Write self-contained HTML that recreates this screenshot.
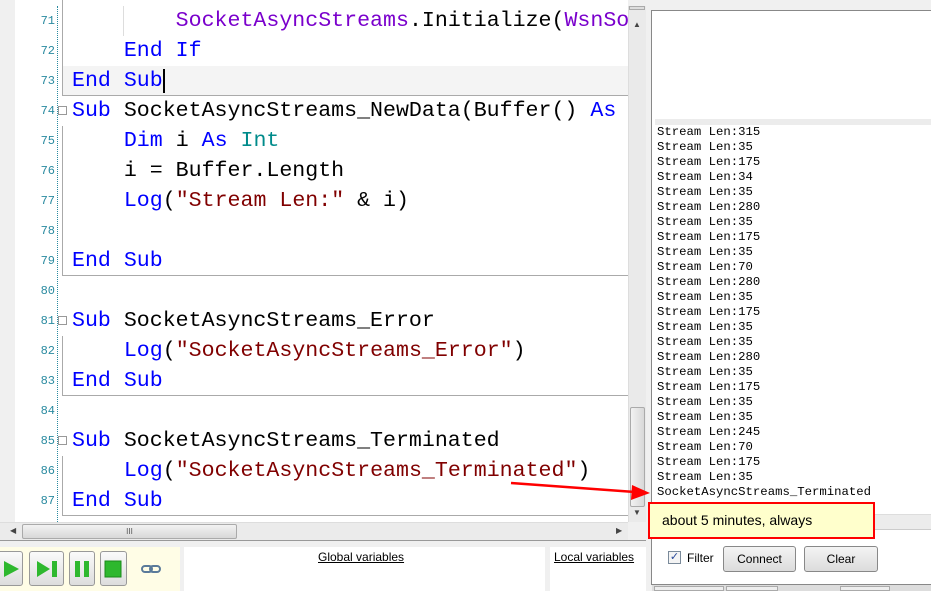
<!DOCTYPE html>
<html><head><meta charset="utf-8"><style>
*{margin:0;padding:0;box-sizing:border-box}
body{width:931px;height:591px;overflow:hidden;background:#f0f0f0;position:relative;font-family:"Liberation Sans",sans-serif}
.a{position:absolute}
.code{font-family:"Liberation Mono",monospace;font-size:21.6px;line-height:30px;white-space:pre;color:#000}
.ln{position:absolute;left:15px;width:40px;text-align:right;font-family:"Liberation Mono",monospace;font-size:12px;color:#2a8aa0;line-height:30px}
.k{color:#0000ff}.p{color:#7a00cc}.t{color:#008b8b}.s{color:#800000}
.log{font-family:"Liberation Mono",monospace;font-size:12.3px;line-height:15px;white-space:pre;color:#000}
.btn{position:absolute;border:1px solid #888;border-radius:3px;background:linear-gradient(#f4f4f4,#dcdcdc);font-size:12px;text-align:center;line-height:24px;color:#000}
.pb{position:absolute;top:551px;width:40px;height:35px;border:1px solid #999;border-radius:3px;background:linear-gradient(#fafafa,#ddd)}
</style></head><body>
<!-- code editor -->
<div class="a" style="left:0;top:0;width:15px;height:522px;background:#f0f0f0"></div>
<div class="a" style="left:15px;top:0;width:613px;height:522px;background:#fff"></div>
<div class="a" style="left:57px;top:6px;height:516px;border-left:1px dotted #2a8aa0"></div>
<div class="a" style="left:62px;top:66px;width:566px;height:30px;background:#f4f4f4"></div>
<div class="a" style="left:62px;top:0;height:96px;border-left:1px solid #aaa"></div>
<div class="a" style="left:62px;top:95px;width:566px;border-top:1px solid #aaa"></div>
<div class="a" style="left:123px;top:6px;height:30px;border-left:1px solid #ddd"></div>
<div class="a" style="left:62px;top:126px;height:150px;border-left:1px solid #aaa"></div>
<div class="a" style="left:62px;top:275px;width:566px;border-top:1px solid #aaa"></div>
<div class="a" style="left:62px;top:336px;height:60px;border-left:1px solid #aaa"></div>
<div class="a" style="left:62px;top:395px;width:566px;border-top:1px solid #aaa"></div>
<div class="a" style="left:62px;top:456px;height:60px;border-left:1px solid #aaa"></div>
<div class="a" style="left:62px;top:515px;width:566px;border-top:1px solid #aaa"></div>
<div class="a" style="left:58px;top:106px;width:9px;height:9px;border:1px solid #999;background:#fff"></div>
<div class="a" style="left:58px;top:316px;width:9px;height:9px;border:1px solid #999;background:#fff"></div>
<div class="a" style="left:58px;top:436px;width:9px;height:9px;border:1px solid #999;background:#fff"></div>

<div class="ln" style="top:6px">71</div><div class="ln" style="top:36px">72</div><div class="ln" style="top:66px">73</div><div class="ln" style="top:96px">74</div><div class="ln" style="top:126px">75</div><div class="ln" style="top:156px">76</div><div class="ln" style="top:186px">77</div><div class="ln" style="top:216px">78</div><div class="ln" style="top:246px">79</div><div class="ln" style="top:276px">80</div><div class="ln" style="top:306px">81</div><div class="ln" style="top:336px">82</div><div class="ln" style="top:366px">83</div><div class="ln" style="top:396px">84</div><div class="ln" style="top:426px">85</div><div class="ln" style="top:456px">86</div><div class="ln" style="top:486px">87</div>

<div class="a code" style="left:72px;top:6px;width:556px;overflow:hidden">        <span class="p">SocketAsyncStreams</span>.Initialize(<span class="p">WsnSocket</span>
    <span class="k">End If</span>
<span class="k">End Sub</span><span style="border-left:2px solid #000"></span>
<span class="k">Sub</span> SocketAsyncStreams_NewData(Buffer() <span class="k">As</span> Byte)
    <span class="k">Dim</span> i <span class="k">As</span> <span class="t">Int</span>
    i = Buffer.Length
    <span class="k">Log</span>(<span class="s">"Stream Len:"</span> &amp; i)

<span class="k">End Sub</span>

<span class="k">Sub</span> SocketAsyncStreams_Error
    <span class="k">Log</span>(<span class="s">"SocketAsyncStreams_Error"</span>)
<span class="k">End Sub</span>

<span class="k">Sub</span> SocketAsyncStreams_Terminated
    <span class="k">Log</span>(<span class="s">"SocketAsyncStreams_Terminated"</span>)
<span class="k">End Sub</span></div>

<!-- vertical scrollbar -->
<div class="a" style="left:628px;top:6px;width:18px;height:516px;background:#eaeaea;border-left:1px solid #ddd"></div>
<div class="a" style="left:629px;top:6px;width:16px;height:4px;background:#ddd;border:1px solid #aaa"></div>
<div class="a" style="left:633px;top:20px;font-size:8px;color:#444">▲</div>
<div class="a" style="left:630px;top:407px;width:15px;height:100px;border:1px solid #aaa;border-radius:2px;background:linear-gradient(90deg,#f2f2f2,#d8d8d8)"></div>
<div class="a" style="left:633px;top:508px;font-size:8px;color:#444">▼</div>
<!-- h scrollbar -->
<div class="a" style="left:0;top:522px;width:628px;height:18px;background:#ebebeb;border-top:1px solid #ddd"></div>
<div class="a" style="left:10px;top:526px;font-size:8px;color:#444">◀</div>
<div class="a" style="left:22px;top:524px;width:215px;height:15px;border:1px solid #aaa;border-radius:2px;background:linear-gradient(#f2f2f2,#d8d8d8);font-size:8px;text-align:center;line-height:13px;color:#555">III</div>
<div class="a" style="left:616px;top:526px;font-size:8px;color:#444">▶</div>
<div class="a" style="left:0;top:540px;width:646px;border-top:1px solid #999"></div>

<!-- bottom panel -->
<div class="a" style="left:0;top:547px;width:180px;height:44px;background:#fffde6"></div>
<div class="pb" style="left:-17px"></div>
<div class="pb" style="left:29px;width:35px"></div>
<div class="pb" style="left:69px;width:26px"></div>
<div class="pb" style="left:100px;width:27px"></div>
<svg class="a" style="left:0;top:558px" width="180" height="22">
<polygon points="4,3 19,11 4,19" fill="#2eb82e"/>
<polygon points="37,3 50,11 37,19" fill="#2eb82e"/><rect x="52" y="3" width="5" height="16" fill="#2eb82e"/>
<rect x="75" y="3" width="5" height="16" fill="#2eb82e"/><rect x="84" y="3" width="5" height="16" fill="#2eb82e"/>
<rect x="105" y="3" width="16" height="16" fill="#2eb82e" stroke="#1a8a1a"/>
<rect x="142" y="8" width="10" height="6" rx="3" fill="none" stroke="#5a7a9a" stroke-width="2"/>
<rect x="150" y="8" width="10" height="6" rx="3" fill="none" stroke="#5a7a9a" stroke-width="2"/>
</svg>
<div class="a" style="left:184px;top:547px;width:361px;height:44px;background:#fff"></div>
<div class="a" style="left:318px;top:550px;font-size:12px;text-decoration:underline">Global variables</div>
<div class="a" style="left:550px;top:547px;width:96px;height:44px;background:#fff"></div>
<div class="a" style="left:554px;top:550px;font-size:12px;text-decoration:underline">Local variables</div>

<!-- right panel -->
<div class="a" style="left:651px;top:10px;width:280px;height:575px;border:1px solid #888;border-right:none;background:#fff"></div>
<div class="a" style="left:655px;top:119px;width:276px;height:6px;background:#ececec"></div>
<div class="a log" style="left:657px;top:125px">Stream Len:315
Stream Len:35
Stream Len:175
Stream Len:34
Stream Len:35
Stream Len:280
Stream Len:35
Stream Len:175
Stream Len:35
Stream Len:70
Stream Len:280
Stream Len:35
Stream Len:175
Stream Len:35
Stream Len:35
Stream Len:280
Stream Len:35
Stream Len:175
Stream Len:35
Stream Len:35
Stream Len:245
Stream Len:70
Stream Len:175
Stream Len:35
SocketAsyncStreams_Terminated</div>
<div class="a" style="left:652px;top:514px;width:279px;height:16px;background:#ececec;border-top:1px solid #ddd;border-bottom:1px solid #ccc"></div>
<div class="a" style="left:668px;top:551px;width:13px;height:13px;border:1px solid #7a8a9a;background:#f4f4f4;font-size:11px;line-height:11px;text-align:center;color:#2a4a9a">✓</div>
<div class="a" style="left:687px;top:551px;font-size:12px">Filter</div>
<div class="btn" style="left:723px;top:546px;width:73px;height:26px">Connect</div>
<div class="btn" style="left:804px;top:546px;width:74px;height:26px">Clear</div>
<div class="a" style="left:652px;top:585px;width:279px;height:6px;background:#ddd"></div>
<div class="a" style="left:654px;top:586px;width:70px;height:5px;background:#eee;border:1px solid #aaa"></div>
<div class="a" style="left:726px;top:586px;width:52px;height:5px;background:#eee;border:1px solid #aaa"></div>
<div class="a" style="left:840px;top:586px;width:50px;height:5px;background:#eee;border:1px solid #aaa"></div>

<!-- callout -->
<div class="a" style="left:648px;top:502px;width:227px;height:37px;background:#ffffcc;border:2px solid #ff0000;font-size:14px;line-height:33px;padding-left:12px;color:#000">about 5 minutes, always</div>
<svg class="a" style="left:505px;top:475px" width="150" height="30">
<line x1="6" y1="8" x2="130" y2="17" stroke="#ff0000" stroke-width="2.5"/>
<polygon points="145,18 127,10 126,25" fill="#ff0000"/>
</svg>
</body></html>
